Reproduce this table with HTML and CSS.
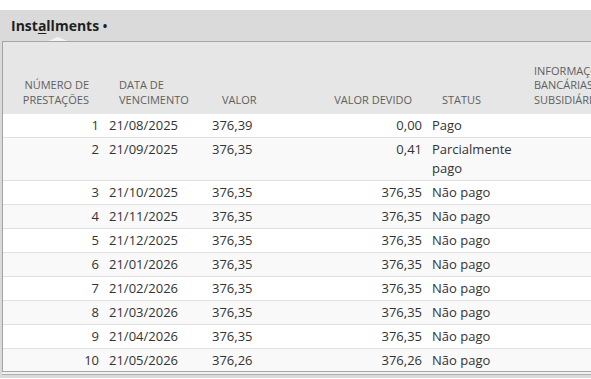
FILE: index.html
```html
<!DOCTYPE html>
<html lang="pt">
<head>
<meta charset="utf-8">
<title>Installments</title>
<link rel="stylesheet" href="styles.css">
</head>
<body>
<div class="page">
  <div class="band">
    <h1 class="title">Inst<u>a</u>llments <span class="dot">•</span></h1>
    <span class="notch"></span>
  </div>
  <div class="frame">
    <div class="panel">
      <table class="grid">
        <colgroup>
          <col class="c1"><col class="c2"><col class="c3"><col class="c4"><col class="c5"><col class="c6">
        </colgroup>
        <thead>
          <tr>
            <th class="r">NÚMERO DE<br>PRESTAÇÕES</th>
            <th>DATA DE<br>VENCIMENTO</th>
            <th>VALOR</th>
            <th class="r">VALOR DEVIDO</th>
            <th>STATUS</th>
            <th>INFORMAÇÕES<br>BANCÁRIAS<br>SUBSIDIÁRIAS</th>
          </tr>
        </thead>
        <tbody>
          <tr><td class="r">1</td><td>21/08/2025</td><td>376,39</td><td class="r">0,00</td><td>Pago</td><td></td></tr>
          <tr><td class="r">2</td><td>21/09/2025</td><td>376,35</td><td class="r">0,41</td><td>Parcialmente pago</td><td></td></tr>
          <tr><td class="r">3</td><td>21/10/2025</td><td>376,35</td><td class="r">376,35</td><td>Não pago</td><td></td></tr>
          <tr><td class="r">4</td><td>21/11/2025</td><td>376,35</td><td class="r">376,35</td><td>Não pago</td><td></td></tr>
          <tr><td class="r">5</td><td>21/12/2025</td><td>376,35</td><td class="r">376,35</td><td>Não pago</td><td></td></tr>
          <tr><td class="r">6</td><td>21/01/2026</td><td>376,35</td><td class="r">376,35</td><td>Não pago</td><td></td></tr>
          <tr><td class="r">7</td><td>21/02/2026</td><td>376,35</td><td class="r">376,35</td><td>Não pago</td><td></td></tr>
          <tr><td class="r">8</td><td>21/03/2026</td><td>376,35</td><td class="r">376,35</td><td>Não pago</td><td></td></tr>
          <tr><td class="r">9</td><td>21/04/2026</td><td>376,35</td><td class="r">376,35</td><td>Não pago</td><td></td></tr>
          <tr><td class="r">10</td><td>21/05/2026</td><td>376,26</td><td class="r">376,26</td><td>Não pago</td><td></td></tr>
        </tbody>
      </table>
    </div>
  </div>
</div>
</body>
</html>
```
FILE: styles.css
```css
html, body {
  margin: 0;
  padding: 0;
  background: #ffffff;
  font-family: "Open Sans", "Noto Sans", sans-serif;
  color: #333333;
}
.page {
  width: 591px;
  height: 379px;
  overflow: hidden;
  padding-top: 10px;
  box-sizing: border-box;
}
.band {
  position: relative;
  height: 31px;
  background: #dadada;
  padding-left: 11px;
  display: flex;
  align-items: center;
}
.title {
  margin: 0;
  font-size: 14px;
  font-weight: 700;
  color: #1f1f1f;
  line-height: 20px;
  padding-top: 1px;
}
.title u {
  text-decoration-thickness: 1px;
  text-underline-offset: 2px;
}
.dot {
  font-size: 12px;
  font-weight: 700;
}
.notch {
  position: absolute;
  left: 48px;
  bottom: 0;
  width: 0;
  height: 0;
  border-left: 10px solid transparent;
  border-right: 10px solid transparent;
  border-bottom: 4px solid #f4f4f4;
}
.frame {
  background: #dadada;
  padding-left: 2px;
  padding-bottom: 6px;
}
.panel {
  border-top: 1px solid #a4a4a4;
  border-left: 1px solid #a4a4a4;
  border-bottom: 1px solid #a4a4a4;
  box-shadow: 0 2px 0 0 #f2f2f2, 0 3px 0 0 #b0b0b0;
  background: #ffffff;
  overflow: hidden;
  height: 329px;
}
.grid {
  border-collapse: collapse;
  table-layout: fixed;
  width: 700px;
}
.c1 { width: 101px; }
.c2 { width: 103px; }
.c3 { width: 93px; }
.c4 { width: 127px; }
.c5 { width: 92px; }
.c6 { width: 184px; }
.grid thead th {
  background: #e6e6e6;
  height: 72px;
  box-sizing: border-box;
  vertical-align: bottom;
  text-align: left;
  font-weight: 400;
  font-size: 11px;
  line-height: 14.5px;
  color: #5f5f5f;
  padding: 0 15px 7px 15px;
  white-space: nowrap;
  overflow: hidden;
}
.grid thead th.r { text-align: right; }
.grid tbody td {
  font-size: 13px;
  line-height: 19px;
  padding: 2px 5px;
  vertical-align: top;
  border-bottom: 1px solid #e0e0e0;
  color: #333333;
}
.grid tbody tr:nth-child(even) td { background: #f9f9f9; }
.grid tbody td.r { text-align: right; }
```
